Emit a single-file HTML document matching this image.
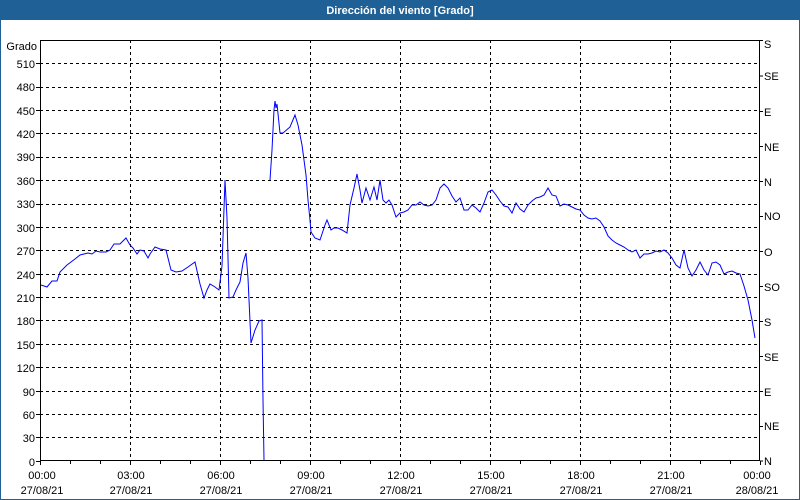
<!DOCTYPE html>
<html><head><meta charset="utf-8"><style>
html,body{margin:0;padding:0;background:#fff;}
svg{display:block;font-family:"Liberation Sans",Tahoma,sans-serif;}
</style></head><body>
<svg width="800" height="500" xmlns="http://www.w3.org/2000/svg">
<rect x="0" y="0" width="800" height="500" fill="#fff"/>
<rect x="0" y="0" width="800" height="20" fill="#1f6096"/>
<rect x="0.5" y="0.5" width="799" height="499" fill="none" stroke="#1f6096"/>
<text x="400" y="14" fill="#fff" font-size="11" font-weight="bold" text-anchor="middle">Dirección del viento [Grado]</text>
<g stroke="#000" stroke-width="1" stroke-dasharray="3,3" fill="none">
<path d="M40 437.5H760M40 414.5H760M40 391.5H760M40 367.5H760M40 344.5H760M40 320.5H760M40 297.5H760M40 274.5H760M40 250.5H760M40 227.5H760M40 204.5H760M40 180.5H760M40 157.5H760M40 133.5H760M40 110.5H760M40 87.5H760M40 63.5H760"/>
<path d="M130.5 40V461M220.5 40V461M310.5 40V461M400.5 40V461M490.5 40V461M580.5 40V461M670.5 40V461"/>
</g>
<rect x="40.5" y="40.5" width="719" height="420" fill="none" stroke="#000"/>
<g stroke="#000">
<path d="M70.5 461v3M100.5 461v3M160.5 461v3M190.5 461v3M250.5 461v3M280.5 461v3M340.5 461v3M370.5 461v3M430.5 461v3M460.5 461v3M520.5 461v3M550.5 461v3M610.5 461v3M640.5 461v3M700.5 461v3M730.5 461v3M40.5 461v4M130.5 461v4M220.5 461v4M310.5 461v4M400.5 461v4M490.5 461v4M580.5 461v4M670.5 461v4M760.5 461v4"/>
<path d="M36 461.5h4M36 437.5h4M36 414.5h4M36 391.5h4M36 367.5h4M36 344.5h4M36 320.5h4M36 297.5h4M36 274.5h4M36 250.5h4M36 227.5h4M36 204.5h4M36 180.5h4M36 157.5h4M36 133.5h4M36 110.5h4M36 87.5h4M36 63.5h4"/>
<path d="M760 40.5h3M760 76h3M760 111.5h3M760 146.5h3M760 181.5h3M760 216.5h3M760 251.5h3M760 286.5h3M760 321.5h3M760 356.5h3M760 391.5h3M760 426.5h3M760 461h3"/>
</g>
<g font-size="11" fill="#000" text-anchor="end">
<text x="37" y="50">Grado</text>
<text x="35" y="68">510</text><text x="35" y="91">480</text><text x="35" y="115">450</text><text x="35" y="138">420</text><text x="35" y="161">390</text><text x="35" y="185">360</text><text x="35" y="208">330</text><text x="35" y="232">300</text><text x="35" y="255">270</text><text x="35" y="279">240</text><text x="35" y="302">210</text><text x="35" y="325">180</text><text x="35" y="349">150</text><text x="35" y="372">120</text><text x="35" y="396">90</text><text x="35" y="419">60</text><text x="35" y="442">30</text><text x="35" y="466">0</text>
</g>
<g font-size="11" fill="#000">
<text x="764" y="48">S</text><text x="764" y="80">SE</text><text x="764" y="116">E</text><text x="764" y="151">NE</text><text x="764" y="186">N</text><text x="764" y="220">NO</text><text x="764" y="256">O</text><text x="764" y="291">SO</text><text x="764" y="326">S</text><text x="764" y="361">SE</text><text x="764" y="396">E</text><text x="764" y="430">NE</text><text x="764" y="465">N</text>
</g>
<g font-size="11" fill="#000" text-anchor="middle">
<text x="42" y="479">00:00</text><text x="42" y="494">27/08/21</text>
<text x="131" y="479">03:00</text><text x="131" y="494">27/08/21</text>
<text x="221" y="479">06:00</text><text x="221" y="494">27/08/21</text>
<text x="311" y="479">09:00</text><text x="311" y="494">27/08/21</text>
<text x="401" y="479">12:00</text><text x="401" y="494">27/08/21</text>
<text x="491" y="479">15:00</text><text x="491" y="494">27/08/21</text>
<text x="581" y="479">18:00</text><text x="581" y="494">27/08/21</text>
<text x="671" y="479">21:00</text><text x="671" y="494">27/08/21</text>
<text x="757" y="479">00:00</text><text x="757" y="494">28/08/21</text>
</g>
<g fill="none" stroke="#0000ff" stroke-width="1">
<polyline points="41,285 47,287 52,281 57,281 60,272 67,265 75,259 80,255 88,253 92,254 96,251 100,252 106,252 110,250 114,244 120,244 126,238 130,245 133,248 137,254 140,250 144,251 148,258 150,254 155,247 160,249 166,250 171,270 176,272 182,271 188,267 195,262 200,284 204,298 207,290 210,284 215,287 219,290 222,266 225,180 227,218 229,298 233,297 236,290 240,282 243,263 246,253 248,278 251,343 255,330 259,321 262,320 263,400 264,460"/>
<polyline points="270,180 272,150 274,110 275,101 276,108 277,104 280,133 283,133 290,127 295,115 298,125 302,145 306,175 308,200 310,220 311,232 315,238 320,240 325,225 327,220 331,230 334,228 338,228 342,230 347,233 350,205 354,188 357,174 360,190 362,203 366,188 370,200 374,187 377,200 380,180 383,200 386,203 389,200 392,205 396,217 400,213 404,212 408,210 412,205 416,205 420,202 424,205 428,206 432,205 436,200 440,188 444,184 448,188 452,196 456,202 460,198 464,210 468,210 472,205 476,208 480,212 484,203 488,192 492,190 496,195 500,201 504,206 508,207 512,213 516,203 520,209 524,212 528,205 532,201 536,198 540,197 544,195 548,188 552,195 556,196 560,206 564,204 568,205 572,207 576,209 580,210 584,215 588,218 592,219 596,218 600,221 604,227 608,236 612,240 616,243 620,245 624,247 628,250 632,252 636,250 640,258 644,254 648,254 652,253 656,251 660,252 664,250 668,253 672,258 676,265 680,268 684,250 688,268 692,276 696,270 700,262 704,270 708,275 712,263 716,262 720,265 724,274 728,272 732,271 736,273 740,274 744,286 748,300 752,320 755,338"/>
</g>
</svg>
</body></html>
